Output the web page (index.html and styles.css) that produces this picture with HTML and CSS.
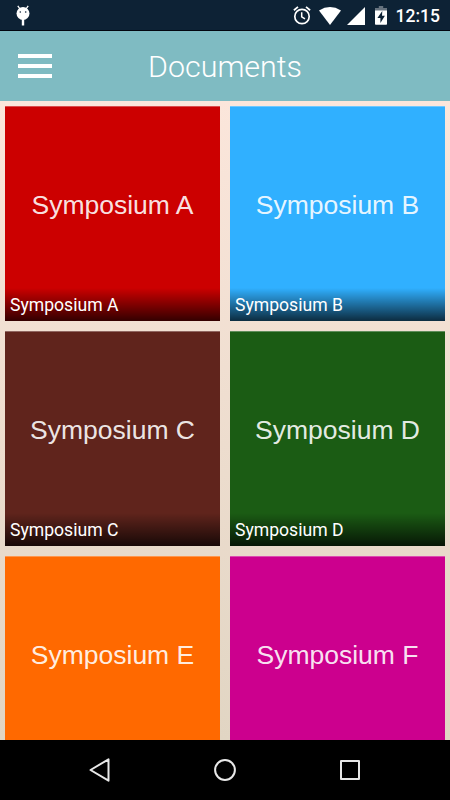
FILE: index.html
```
<!DOCTYPE html>
<html lang="en">
<head>
    <meta charset="UTF-8">
    <meta name="viewport" content="width=device-width, initial-scale=1.0">
    <link rel="stylesheet" href="styles.css">
    <title>Documents</title>
</head>
<body>
    <!-- Status bar -->
    <div class="status-bar">
        <svg class="debug-icon" width="14" height="21" viewBox="0 0 14 21">
            <path d="M1.8 .8 L4 4 M12.2 .8 L10 4" stroke="#fff" stroke-width="1.3"/>
            <circle cx="7" cy="8.5" r="6.5" fill="#fff"/>
            <path d="M7 13v7.500" stroke="#fff" stroke-width="2.4"/>
            <circle cx="4.3" cy="7" r=".8" fill="#0d2235"/>
            <circle cx="9.7" cy="7" r=".8" fill="#0d2235"/>
        </svg>
        <div class="status-icons">
            <svg class="alarm-icon" width="18" height="19" viewBox="0 0 18 19" fill="none" stroke="#fff">
                <circle cx="9" cy="10.5" r="7.2" stroke-width="1.7"/>
                <path d="M.9 4.2 L5 .9 M17.1 4.2 L13 .9" stroke-width="1.8"/>
                <path d="M8.7 6.3v4.6l3.3 2" stroke-width="1.5"/>
            </svg>
            <svg class="wifi-icon" width="22" height="18" viewBox="0 0 22 18">
                <path d="M0 3.4 Q11 -3.4 22 3.4 L11 18z" fill="#fff"/>
            </svg>
            <svg class="signal-icon" width="18" height="18" viewBox="0 0 18 18">
                <path d="M18 0v18H0z" fill="#fff"/>
            </svg>
            <svg class="battery-icon" width="12" height="19" viewBox="0 0 12 19">
                <path d="M3.8 0h4.4v2H12v3H0V2h3.8z" fill="#66727e"/>
                <path d="M0 4.5h12V18q0 .8-.8.8H.8Q0 18.8 0 18z" fill="#fff"/>
                <path d="M7.3 5 L2.4 12h3v5l4.5-7.2H7z" fill="#0d2235"/>
            </svg>
            <span class="clock">12:15</span>
        </div>
    </div>

    <!-- Title bar -->
    <div class="header">
        <div class="menu">
            <span></span>
            <span></span>
            <span></span>
        </div>
        <h1>Documents</h1>
    </div>

    <div class="grid">
        <div class="tile red">
            <span class="name">Symposium A</span>
            <p>Symposium A</p>
        </div>
        <div class="tile blue">
            <span class="name">Symposium B</span>
            <p>Symposium B</p>
        </div>
        <div class="tile brown">
            <span class="name">Symposium C</span>
            <p>Symposium C</p>
        </div>
        <div class="tile green">
            <span class="name">Symposium D</span>
            <p>Symposium D</p>
        </div>
        <div class="tile orange">
            <span class="name">Symposium E</span>
        </div>
        <div class="tile pink">
            <span class="name">Symposium F</span>
        </div>
    </div>

    <!-- Navigation buttons -->
    <div class="nav-bar">
        <svg width="24" height="26" viewBox="0 0 24 26">
            <path d="M20.5 2.3v21.4L2.5 13z"/>
        </svg>
        <svg width="24" height="26" viewBox="0 0 24 26">
            <circle cx="12" cy="13" r="9.9"/>
        </svg>
        <svg width="24" height="26" viewBox="0 0 24 26">
            <rect x="3" y="4" width="18" height="18"/>
        </svg>
    </div>
</body>
</html>
```

FILE: styles.css
```
body {
    margin: 0;
    height: 800px;
    display: flex;
    flex-direction: column;
    overflow: hidden;
    background-color: black;
    font-family: Roboto, sans-serif;
    color: white;
}
.status-bar {
    box-sizing: border-box;
    flex: none;
    height: 31px;
    display: flex;
    justify-content: space-between;
    padding: 0 10px 0 16px;
    background-color: #0d2235;
    border-bottom: 1px solid #02060f;
}
.debug-icon {
    margin-top: 5px;
}
.status-icons {
    display: flex;
}
.alarm-icon {
    margin: 6px 8px 0 0;
}
.wifi-icon {
    margin: 7px 6px 0 0;
}
.signal-icon {
    margin: 7px 10px 0 0;
}
.battery-icon {
    margin: 6px 9px 0 0;
}
.clock {
    font-size: 17.5px;
    font-weight: 500;
    line-height: 33px;
}
.header {
    flex: none;
    height: 70px;
    display: grid;
    grid-template-columns: 70px 1fr 70px;
    background-color: #7fbbc2;
}
.menu {
    display: flex;
    flex-direction: column;
    gap: 6px;
    padding: 23px 0 0 18px;
}
.menu span {
    width: 34px;
    height: 4px;
    background-color: white;
}
h1 {
    margin: 0;
    font-size: 30.4px;
    font-weight: 300;
    line-height: 72px;
    text-align: center;
}
.grid {
    flex: 1;
    min-height: 0;
    overflow: hidden;
    display: grid;
    grid-template-columns: 215px 215px;
    grid-auto-rows: 215px;
    gap: 10px;
    padding: 5px 5px 0;
    background: linear-gradient(#fbe6db, #e1d5c3);
}
.tile {
    box-sizing: border-box;
    display: flex;
    flex-direction: column;
    justify-content: space-between;
    padding-top: 78px;
    border-top: 1px solid rgba(255, 255, 255, 0.3);
}
.name {
    font-family: "Liberation Sans", Arial, sans-serif;
    font-size: 26.5px;
    line-height: 40px;
    text-align: center;
    color: rgba(255, 255, 255, 0.9);
}
.tile p {
    margin: 0;
    height: 33px;
    padding-left: 5px;
    font-size: 17.6px;
    line-height: 34px;
    background: linear-gradient(transparent, rgba(0, 0, 0, 0.75));
}
.red {
    background-color: #cc0000;
}
.blue {
    background-color: #30b0ff;
}
.brown {
    background-color: #60241c;
}
.green {
    background-color: #1b5c14;
}
.orange {
    background-color: #ff6900;
}
.pink {
    background-color: #cc008e;
}
.orange, .pink {
    justify-content: flex-start;
}
.nav-bar {
    flex: none;
    height: 60px;
    display: flex;
    align-items: center;
    justify-content: center;
    gap: 101px;
}
.nav-bar svg {
    fill: none;
    stroke: #e8e8e8;
    stroke-width: 2;
    stroke-linejoin: round;
}
```
